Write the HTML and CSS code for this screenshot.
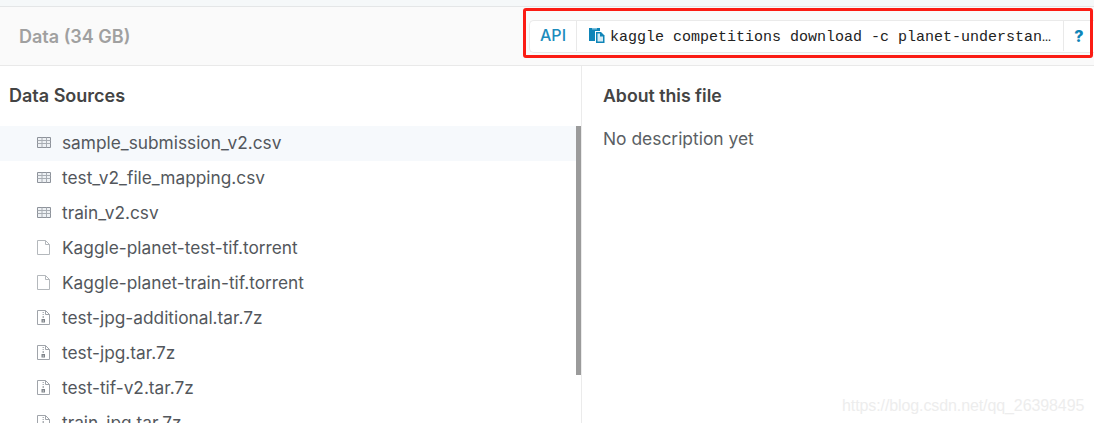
FILE: index.html
```html
<!DOCTYPE html>
<html lang="en">
<head>
<meta charset="utf-8">
<title>Data</title>
<link rel="stylesheet" href="styles.css">
</head>
<body>
<svg class="defs" width="0" height="0" aria-hidden="true">
  <symbol id="i-table" viewBox="0 0 14 11">
    <path d="M.5.5h13v10H.5z" fill="#eef1f4" stroke="#8d929a"/>
    <path d="M.5 3.5h13M.5 6.5h13M5 .5v10M9.500 .5v10" fill="none" stroke="#a8adb3"/>
  </symbol>
  <symbol id="i-file" viewBox="0 0 13 15">
    <path d="M.5.500h8l4 4v10H.5z" fill="#fff" stroke="#b4b8bc"/>
    <path d="M8.500.5v4h4" fill="none" stroke="#b4b8bc"/>
  </symbol>
  <symbol id="i-zip" viewBox="0 0 13 15">
    <path d="M.5.500h8l4 4v10H.5z" fill="#fff" stroke="#a0a4aa"/>
    <path d="M8.500.5v4h4" fill="none" stroke="#a0a4aa"/>
    <path d="M5.500 2h1.500v1H5.500zM5.500 4h1.500v1H5.500zM5.500 6h1.500v2H5.500z" fill="#aeb2b6"/>
    <path d="M4.500 9h3.500v3.500H4.500z" fill="#7d8288"/>
    <path d="M5.700 10.500h1.100v1H5.700z" fill="#fff"/>
  </symbol>
</svg>
<div class="top-strip"></div>
<header class="data-header">
  <h2 class="data-title">Data (34 GB)</h2>
  <div class="api-bar">
    <span class="api-label">API</span>
    <div class="api-command">
      <svg class="copy-icon" viewBox="0 0 16 16" aria-hidden="true">
        <path d="M0 0h11v3H6v10H0z" fill="#0f85b8"/>
        <path d="M3 0h5v1.500H3z" fill="#7fc0dc"/>
        <path d="M7 4h5l3.500 3.500V15H7z" fill="#0f85b8"/>
        <path d="M8.500 5.500h2.500v3h3v5H8.500z" fill="#d7ecf5"/>
      </svg>
      <span class="command-text">kaggle competitions download -c planet-understanding-the-amazon-from-space</span>
    </div>
    <span class="api-help">?</span>
  </div>
</header>
<main class="browser">
  <section class="sources">
    <h3 class="panel-title">Data Sources</h3>
    <div class="list-wrap">
      <ul class="file-list">
        <li class="file-row is-active"><svg class="icon-table"><use href="#i-table"/></svg>sample_submission_v2.csv</li>
        <li class="file-row"><svg class="icon-table"><use href="#i-table"/></svg>test_v2_file_mapping.csv</li>
        <li class="file-row"><svg class="icon-table"><use href="#i-table"/></svg>train_v2.csv</li>
        <li class="file-row"><svg class="icon-file"><use href="#i-file"/></svg>Kaggle-planet-test-tif.torrent</li>
        <li class="file-row"><svg class="icon-file"><use href="#i-file"/></svg>Kaggle-planet-train-tif.torrent</li>
        <li class="file-row"><svg class="icon-file"><use href="#i-zip"/></svg>test-jpg-additional.tar.7z</li>
        <li class="file-row"><svg class="icon-file"><use href="#i-zip"/></svg>test-jpg.tar.7z</li>
        <li class="file-row"><svg class="icon-file"><use href="#i-zip"/></svg>test-tif-v2.tar.7z</li>
        <li class="file-row"><svg class="icon-file"><use href="#i-zip"/></svg>train-jpg.tar.7z</li>
      </ul>
      <div class="scroll-thumb"></div>
    </div>
  </section>
  <section class="about">
    <h3 class="panel-title">About this file</h3>
    <p class="about-text">No description yet</p>
  </section>
</main>
<div class="annotation"></div>
<div class="watermark">https://blog.csdn.net/qq_26398495</div>
</body>
</html>
```
FILE: styles.css
```css
* { box-sizing: border-box; }
html, body { margin: 0; height: 100%; }
body {
  position: relative;
  height: 423px;
  overflow: hidden;
  background: #fff;
  font-family: Inter, "Liberation Sans", sans-serif;
  color: #4a4f55;
}
.defs { position: absolute; }
.top-strip {
  height: 7px;
  background: #f5f8f9;
  border-bottom: 1px solid #e4e6e7;
}
.data-header {
  display: flex;
  align-items: center;
  justify-content: space-between;
  height: 59px;
  padding: 0 0 0 19px;
  background: #fafafa;
  border-bottom: 1px solid #e9e9e9;
}
.data-title {
  margin: 0;
  font-size: 18px;
  font-weight: 600;
  color: #a0a0a0;
}
.api-bar {
  display: flex;
  align-items: center;
  width: 565px;
  height: 33px;
  background: #fff;
  border: 1px solid #eaeaea;
  border-right: 0;
  border-radius: 5px 0 0 5px;
}
.api-label {
  width: 47px;
  height: 30px;
  line-height: 29px;
  text-align: center;
  font-size: 16px;
  font-weight: 500;
  color: #1c8cbd;
  border-right: 1px solid #e9e9e9;
}
.api-command {
  display: flex;
  align-items: center;
  flex: 1;
  min-width: 0;
  height: 30px;
  padding: 0 10px 0 12px;
  gap: 5px;
}
.copy-icon { flex: none; width: 16px; height: 16px; }
.command-text {
  padding-top: 2px;
  font-family: "Liberation Mono", "DejaVu Sans Mono", monospace;
  font-size: 15px;
  color: #222;
  white-space: nowrap;
  overflow: hidden;
  text-overflow: ellipsis;
}
.api-help {
  flex: none;
  width: 31px;
  height: 30px;
  line-height: 31px;
  text-align: center;
  font-size: 16px;
  font-weight: 800;
  color: #0f85b8;
  border-left: 1px solid #e9e9e9;
}
.browser {
  display: flex;
  height: 357px;
}
.sources {
  width: 582px;
  flex: none;
  border-right: 1px solid #ebebeb;
  overflow: hidden;
}
.panel-title {
  margin: 0;
  font-size: 17.700px;
  font-weight: 600;
  line-height: 22px;
  color: #444;
}
.sources .panel-title { padding: 19px 0 0 9px; height: 60px; font-size: 18px; }
.list-wrap { position: relative; }
.file-list { margin: 0; padding: 0; list-style: none; }
.file-row {
  display: flex;
  align-items: center;
  height: 35px;
  padding: 0 0 2px 37px;
  font-size: 17.300px;
  color: #53575c;
  white-space: nowrap;
}
.is-active { background: #f6f9fc; margin-right: 5px; }
.icon-table { width: 14px; height: 11px; margin-right: 11px; flex: none; }
.icon-file { width: 13px; height: 15px; margin-right: 12px; flex: none; }
.scroll-thumb {
  position: absolute;
  top: 0;
  right: 0;
  width: 5px;
  height: 249px;
  background: #9b9b9b;
}
.about { flex: 1; padding: 19px 0 0 21px; }
.about-text {
  margin: 21px 0 0;
  font-size: 17.400px;
  line-height: 22px;
  color: #5b5f64;
}
.annotation {
  position: absolute;
  left: 523px;
  top: 8px;
  width: 570px;
  height: 50px;
  border: 3px solid #fb1c14;
  border-radius: 3px;
}
.watermark {
  position: absolute;
  left: 842px;
  top: 397px;
  font-family: "Liberation Sans", sans-serif;
  font-size: 16px;
  letter-spacing: -0.1px;
  color: #ededed;
  white-space: nowrap;
}
```
